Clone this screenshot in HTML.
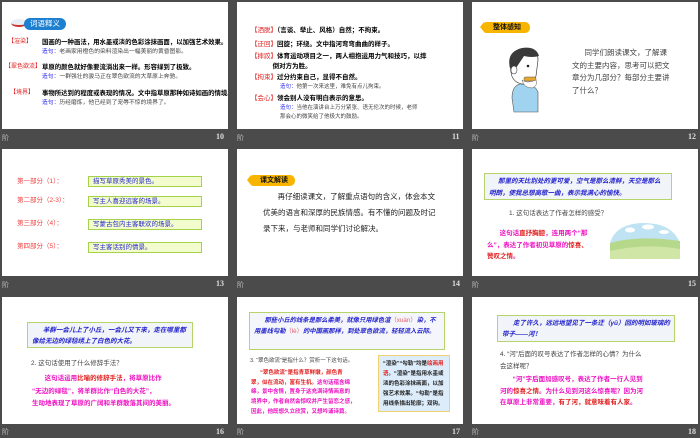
<!DOCTYPE html>
<html><head><meta charset="utf-8"><style>
*{margin:0;padding:0;box-sizing:border-box}
body{width:700px;height:438px;background:#4b4b4b;position:relative;overflow:hidden;font-family:"Liberation Sans","Noto Sans CJK SC",sans-serif}
.s{position:absolute;width:226px;height:127px;background:#fff;overflow:hidden}
.a{position:absolute;white-space:nowrap;line-height:1.2}
.ft{position:absolute;font-size:7px;color:#bbb}
.pn{position:absolute;font-size:8px;color:#ddd;font-weight:bold;font-family:"Liberation Serif",serif}
.r{color:#e02020}.bl{color:#3333ee}.g{color:#444}.m{color:#ee10c0}
.b{font-weight:bold}
.tag{position:absolute;background:#f7b500;height:11px;font-size:7px;font-weight:bold;color:#111;line-height:11px;padding-left:9px;border-radius:2px 5px 5px 2px}
.tag:before{content:"";position:absolute;left:-4px;top:0;border-right:4px solid #f7b500;border-top:5.5px solid transparent;border-bottom:5.5px solid transparent}
.gb{position:absolute;background:#f3fccd;border:1px solid #a4d24a;font-size:6.5px;color:#2a2ad0;padding-left:4px;line-height:10px}
.qb{position:absolute;background:#f1f4f8;border:1.5px solid #b6d46a;color:#2222cc;font-weight:bold;font-style:italic;font-size:6.5px;line-height:12px;padding:2px 4px;white-space:normal}
</style></head><body>

<!-- slide 10 -->
<div class="s" style="left:2px;top:2px">
  <div class="a" style="left:9px;top:17px;width:16px;height:8px;background:#e8eef5;border-radius:50%;border-bottom:2px solid #c33"></div>
  <div class="a" style="left:22px;top:16px;width:42px;height:12px;background:#1d7fd0;border-radius:6px;color:#fff;font-size:7.5px;line-height:12px;text-align:center">词语释义</div>
  <div class="a r" style="left:6px;top:37px;font-size:6px">【渲染】</div>
  <div class="a b" style="left:40px;top:37px;font-size:6.4px">国画的一种画法，用水墨或淡的色彩涂抹画面，以加强艺术效果。</div>
  <div class="a" style="left:40px;top:47px;font-size:5.8px"><span class="bl">造句：</span><span class="g">老画家用橙色的染料渲染出一幅美丽的黄昏图影。</span></div>
  <div class="a r" style="left:3px;top:62px;font-size:6px">【翠色欲流】</div>
  <div class="a b" style="left:40px;top:62px;font-size:6.4px">草原的颜色就好像要流淌出来一样。形容绿到了极致。</div>
  <div class="a" style="left:40px;top:72px;font-size:5.8px"><span class="bl">造句：</span><span class="g">一群强壮的骏马正在翠色欲流的大草原上奔驰。</span></div>
  <div class="a r" style="left:8px;top:88px;font-size:6px">【境界】</div>
  <div class="a b" style="left:40px;top:88px;font-size:6.4px">事物所达到的程度或表现的情况。文中指草原那种如诗如画的情境。</div>
  <div class="a" style="left:40px;top:98px;font-size:5.8px"><span class="bl">造句：</span><span class="g">历经磨炼，他已经到了宠辱不惊的境界了。</span></div>
</div>
<div class="ft" style="left:2px;top:133px">阶</div><div class="pn" style="left:216px;top:132px">10</div>

<!-- slide 11 -->
<div class="s" style="left:237px;top:2px">
  <div class="a" style="left:14px;top:25px;font-size:6.5px"><span class="r">【洒脱】</span><b>（言谈、举止、风格）自然；不拘束。</b></div>
  <div class="a" style="left:14px;top:39px;font-size:6.5px"><span class="r">【迂回】</span><b>回旋；环绕。文中指河弯弯曲曲的样子。</b></div>
  <div class="a" style="left:14px;top:50px;font-size:6.5px;line-height:10px"><span class="r">【摔跤】</span><b>体育运动项目之一，两人相抱运用力气和技巧，以摔<br>&nbsp;&nbsp;&nbsp;&nbsp;&nbsp;&nbsp;&nbsp;&nbsp;&nbsp;&nbsp;&nbsp;&nbsp;倒对方为胜。</b></div>
  <div class="a" style="left:14px;top:72px;font-size:6.5px"><span class="r">【拘束】</span><b>过分约束自己，显得不自然。</b></div>
  <div class="a" style="left:43px;top:82px;font-size:5.5px"><span class="bl">造句：</span><span class="g">他第一次来这里，难免有点儿拘束。</span></div>
  <div class="a" style="left:14px;top:93px;font-size:6.5px"><span class="r">【会心】</span><b>领会别人没有明白表示的意思。</b></div>
  <div class="a" style="left:43px;top:102px;font-size:5.5px;line-height:9px"><span class="bl">造句：</span><span class="g">当他在演讲台上万分紧张、语无伦次的时候，老师<br>那会心的微笑给了他极大的鼓励。</span></div>
</div>
<div class="ft" style="left:237px;top:133px">阶</div><div class="pn" style="left:452px;top:132px">11</div>

<!-- slide 12 -->
<div class="s" style="left:472px;top:2px">
  <div class="tag" style="left:12px;top:20px;width:46px">整体感知</div>
  <svg class="a" style="left:30px;top:44px" width="50" height="68" viewBox="0 0 50 68">
    <path d="M18 38 Q10 40 10 52 L12 66 L36 66 L36 46 Q32 38 26 38 Z" fill="#9fd3f0" stroke="#555" stroke-width="0.6"/>
    <path d="M8 20 Q6 4 22 3 Q36 3 36 14 L34 30 Q30 40 20 38 Q10 36 9 26 Z" fill="#fff" stroke="#444" stroke-width="0.7"/>
    <path d="M8 22 Q4 6 20 2 Q34 0 37 10 Q30 12 22 10 Q18 16 14 22 Z" fill="#3a3a3a"/>
    <ellipse cx="12" cy="24" rx="3" ry="4" fill="#fff" stroke="#444" stroke-width="0.6"/>
    <circle cx="26" cy="20" r="1.3" fill="#222"/>
    <rect x="22" y="31" width="12" height="4" rx="1.5" fill="#e8a830" stroke="#555" stroke-width="0.5"/>
    <path d="M20 34 Q24 38 34 34 Q36 40 30 42 Q22 42 20 34" fill="#fff" stroke="#555" stroke-width="0.5"/>
  </svg>
  <div class="a g" style="left:100px;top:45px;font-size:7.5px;line-height:12.5px;white-space:normal;width:100px">&nbsp;&nbsp;&nbsp;&nbsp;&nbsp;&nbsp;同学们朗读课文，了解课文的主要内容，思考可以把文章分为几部分？每部分主要讲了什么？</div>
</div>
<div class="ft" style="left:472px;top:133px">阶</div><div class="pn" style="left:688px;top:132px">12</div>

<!-- slide 13 -->
<div class="s" style="left:2px;top:149px">
  <div class="a r" style="left:15px;top:29px;font-size:6.5px;color:#f04040">第一部分（1）：</div>
  <div class="gb" style="left:86px;top:27px;width:114px;height:11px">描写草原秀美的景色。</div>
  <div class="a r" style="left:15px;top:48px;font-size:6.5px;color:#f04040">第二部分（2-3）：</div>
  <div class="gb" style="left:86px;top:47px;width:114px;height:11px">写主人喜迎远客的场景。</div>
  <div class="a r" style="left:15px;top:71px;font-size:6.5px;color:#f04040">第三部分（4）：</div>
  <div class="gb" style="left:86px;top:70px;width:114px;height:11px">写蒙古包内主客联欢的场景。</div>
  <div class="a r" style="left:15px;top:94px;font-size:6.5px;color:#f04040">第四部分（5）：</div>
  <div class="gb" style="left:86px;top:93px;width:114px;height:11px">写主客话别的情景。</div>
</div>
<div class="ft" style="left:2px;top:280px">阶</div><div class="pn" style="left:216px;top:279px">13</div>

<!-- slide 14 -->
<div class="s" style="left:237px;top:149px">
  <div class="tag" style="left:14px;top:26px;width:44px">课文解读</div>
  <div class="a" style="left:26px;top:40px;font-size:7.5px;line-height:16px;white-space:normal;width:176px;color:#222">&nbsp;&nbsp;&nbsp;&nbsp;&nbsp;&nbsp;&nbsp;再仔细读课文，了解重点语句的含义，体会本文优美的语言和深厚的民族情感。有不懂的问题及时记录下来，与老师和同学们讨论解决。</div>
</div>
<div class="ft" style="left:237px;top:280px">阶</div><div class="pn" style="left:452px;top:279px">14</div>

<!-- slide 15 -->
<div class="s" style="left:472px;top:149px">
  <div class="qb" style="left:12px;top:24px;width:188px;height:27px">&nbsp;&nbsp;&nbsp;&nbsp;&nbsp;那里的天比别处的更可爱，空气是那么清鲜，天空是那么明朗，使我总想高歌一曲，表示我满心的愉快。</div>
  <div class="a g" style="left:37px;top:61px;font-size:6.5px">1. 这句话表达了作者怎样的感受？</div>
  <div class="a b" style="left:15px;top:79px;font-size:6.5px;line-height:11.5px"><span class="m">&nbsp;&nbsp;&nbsp;&nbsp;&nbsp;&nbsp;&nbsp;这句话</span><span class="r">直抒胸臆</span><span class="m">，连用两个“那<br>么”，表达了作者初见草原的</span><span class="r">惊喜、<br>赞叹之情</span><span class="m">。</span></div>
  <svg class="a" style="left:136px;top:72px" width="74" height="40" viewBox="0 0 74 40">
    <path d="M2 38 L2 22 Q8 2 36 2 Q64 2 72 22 L72 38 Z" fill="#bfe3f3"/>
    <path d="M2 22 Q30 14 72 20 L72 38 L2 38 Z" fill="#b5d88a"/>
    <path d="M2 30 Q36 22 72 28 L72 38 L2 38 Z" fill="#cfe6a6"/>
    <ellipse cx="22" cy="9" rx="5" ry="2.5" fill="#fff"/><ellipse cx="40" cy="6" rx="6" ry="2.5" fill="#fff"/><ellipse cx="56" cy="11" rx="5" ry="2" fill="#fff"/>
  </svg>
</div>
<div class="ft" style="left:472px;top:280px">阶</div><div class="pn" style="left:688px;top:279px">15</div>

<!-- slide 16 -->
<div class="s" style="left:2px;top:297px">
  <div class="qb" style="left:25px;top:25px;width:166px;height:26px;line-height:11px">&nbsp;&nbsp;&nbsp;&nbsp;&nbsp;&nbsp;羊群一会儿上了小丘，一会儿又下来，走在哪里都像给无边的绿毯绣上了白色的大花。</div>
  <div class="a g" style="left:29px;top:63px;font-size:6.5px">2. 这句话使用了什么修辞手法？</div>
  <div class="a b m" style="left:30px;top:76px;font-size:6.5px;line-height:12.5px">&nbsp;&nbsp;&nbsp;&nbsp;&nbsp;&nbsp;&nbsp;这句话运用<span class="r">比喻的修辞手法</span>，将草原比作<br>“无边的绿毯”，将羊群比作“白色的大花”，<br>生动地表现了草原的广阔和羊群散落其间的美丽。</div>
</div>
<div class="ft" style="left:2px;top:427px">阶</div><div class="pn" style="left:216px;top:427px">16</div>

<!-- slide 17 -->
<div class="s" style="left:237px;top:297px">
  <div class="qb" style="left:12px;top:15px;width:196px;height:38px;background:#f5f6fb;line-height:11px;font-size:6.3px">&nbsp;&nbsp;&nbsp;&nbsp;&nbsp;&nbsp;那些小丘的线条是那么柔美，就像只用绿色渲<span style="color:#e06070;font-style:normal;font-weight:normal">（xuàn）</span>染，不用墨线勾勒<span style="color:#e06070;font-style:normal;font-weight:normal">（lè）</span>的中国画那样，到处翠色欲流，轻轻流入云际。</div>
  <div class="a g" style="left:13px;top:61px;font-size:5.5px">3. “翠色欲流”是指什么？赏析一下这句话。</div>
  <div class="a b m" style="left:14px;top:72px;font-size:5.5px;line-height:9.7px"><span class="r">&nbsp;&nbsp;&nbsp;&nbsp;&nbsp;&nbsp;“翠色欲流”是指青草鲜嫩，颜色青<br>翠，似在流动，富有生机。</span>这句话蕴含绵<br>绵，景中含情，置身于这充满诗情画意的<br>境界中，作者自然会惊叹并产生留恋之感，<br>因此，他既想久立欣赏，又想吟诵诗篇。</div>
  <div class="a" style="left:141px;top:58px;width:72px;height:57px;background:#dcecfb;border:1.5px solid #f0d070;font-size:5.5px;font-weight:bold;line-height:10px;padding:3px 4px;white-space:normal;color:#222">“渲染”“勾勒”均是<span class="r">绘画用语</span>。“渲染”是指用水墨或淡的色彩涂抹画面，以加强艺术效果。“勾勒”是指用线条描出轮廓；双钩。</div>
</div>
<div class="ft" style="left:237px;top:427px">阶</div><div class="pn" style="left:452px;top:427px">17</div>

<!-- slide 18 -->
<div class="s" style="left:472px;top:297px">
  <div class="qb" style="left:25px;top:18px;width:178px;height:27px;line-height:11px">&nbsp;&nbsp;&nbsp;&nbsp;&nbsp;&nbsp;走了许久，远远地望见了一条迂（yū）回的明如玻璃的带子——河！</div>
  <div class="a g" style="left:28px;top:52px;font-size:6.5px;line-height:12px">4. “河”后面的叹号表达了作者怎样的心情？为什么<br>会这样呢？</div>
  <div class="a b m" style="left:28px;top:77px;font-size:6.5px;line-height:11.5px">&nbsp;&nbsp;&nbsp;&nbsp;&nbsp;&nbsp;&nbsp;“河”字后面加感叹号，表达了作者一行人见到<br>河的<span class="r">惊喜之情</span>。为什么见到河这么惊喜呢？因为河<br>在草原上非常重要，<span class="r">有了河，就意味着有人家</span>。</div>
</div>
<div class="ft" style="left:472px;top:427px">阶</div><div class="pn" style="left:688px;top:427px">18</div>

</body></html>
